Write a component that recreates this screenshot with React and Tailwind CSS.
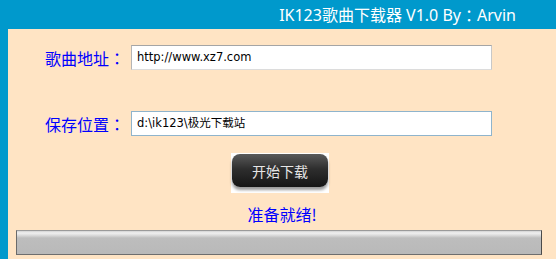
export default function App() {
  return (
    <div className="w-[556px] h-[259px] bg-[#0099cc] flex flex-col overflow-hidden font-['Noto_Sans_CJK_SC','Noto_Sans',sans-serif]">
      <div className="h-[29px] flex items-center justify-end pr-[40px] text-white text-[16px] leading-none font-['Noto_Sans','Noto_Sans_CJK_SC',sans-serif]">
        <span>IK123歌曲下载器 V1.0 By</span>
        <span className="font-['Noto_Sans_CJK_TC',sans-serif]">：</span>
        <span>Arvin</span>
      </div>
      <div className="flex-1 ml-[8px] bg-[#ffe4c4] flex flex-col">
        <div className="mt-[16px] flex items-center">
          <div className="w-[123px] pl-[37px] text-[16px] text-[#0000ff] leading-none">
            歌曲地址<span className="font-['Noto_Sans_CJK_TC',sans-serif]">：</span>
          </div>
          <div className="w-[361px] h-[25px] bg-white border border-t-[#a5a5a5] border-l-[#b5b5b5] border-r-[#c8c8c8] border-b-[#dcdcdc] flex items-center pl-[5px] text-[11.5px] text-black font-['DejaVu_Sans','Noto_Sans_CJK_SC',sans-serif]">
            http://www.xz7.com
          </div>
        </div>
        <div className="mt-[41px] flex items-center">
          <div className="w-[123px] pl-[37px] text-[16px] text-[#0000ff] leading-none">
            保存位置<span className="font-['Noto_Sans_CJK_TC',sans-serif]">：</span>
          </div>
          <div className="w-[361px] h-[25px] bg-white border border-[#8fb4cc] flex items-center pl-[5px] text-[11.5px] text-black font-['DejaVu_Sans','Noto_Sans_CJK_SC',sans-serif]">
            d:\ik123\极光下载站
          </div>
        </div>
        <div className="mt-[17px] flex justify-center pr-[4px]">
          <div className="w-[98px] h-[40px] bg-white pt-[1px] px-[1px]">
            <div className="h-[33px] rounded-[8px] bg-[linear-gradient(to_bottom,#5a5a5a_0%,#2e2e2e_45%,#151515_100%)] shadow-[0_3px_3px_rgba(0,0,0,0.4)] flex items-center justify-center text-[14px] text-[#e6e6e6] leading-none">
              开始下载
            </div>
          </div>
        </div>
        <div className="mt-[11px] h-[20px] flex items-center justify-center text-[16px] text-[#0000ff] leading-none">
          准备就绪!
        </div>
        <div className="mt-[6px] ml-[8px] w-[526px] h-[25px] border border-t-[#9a9a9a] border-l-[#6a6a6a] border-r-[#4a4a4a] border-b-[#6e6e6e] bg-[linear-gradient(to_bottom,#d2d2d2_0px,#f0f0f0_2px,#dedede_4px,#bdbdbd_7px,#b9b9b9_100%)]" />
      </div>
    </div>
  );
}
